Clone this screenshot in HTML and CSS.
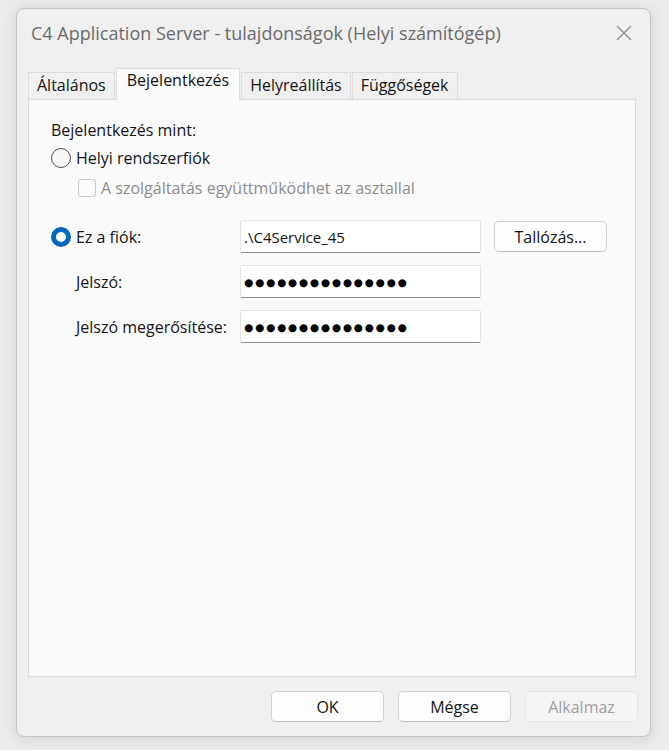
FILE: index.html
```html
<!DOCTYPE html>
<html lang="hu">
<head>
    <meta charset="UTF-8" />
    <meta name="viewport" content="width=device-width, initial-scale=1.0" />
    <title>C4 Application Server - tulajdonságok</title>
    <link rel="stylesheet" href="styles.css">
</head>
<body>

    <!-- Service properties dialog -->
    <div class="window">
        <div class="titlebar">
            <span class="title">C4 Application Server - tulajdonságok (Helyi számítógép)</span>
            <svg class="close" width="16" height="16" viewBox="0 0 16 16">
                <path d="M1 1 L15 15 M15 1 L1 15" stroke="#8a8a8a" stroke-width="1.3" fill="none" />
            </svg>
        </div>

        <div class="tabs">
            <div class="tab">Általános</div>
            <div class="tab active">Bejelentkezés</div>
            <div class="tab">Helyreállítás</div>
            <div class="tab">Függőségek</div>
        </div>

        <div class="panel">
            <div class="caption">Bejelentkezés mint:</div>

            <div class="option first">
                <span class="radio"></span>
                <span>Helyi rendszerfiók</span>
            </div>
            <div class="option sub disabled">
                <span class="checkbox"></span>
                <span>A szolgáltatás együttműködhet az asztallal</span>
            </div>

            <div class="account">
                <div class="option">
                    <span class="radio checked"></span>
                    <span>Ez a fiók:</span>
                </div>
                <div class="field">.\C4Service_45</div>
                <button class="btn">Tallózás...</button>

                <div class="label">Jelszó:</div>
                <div class="field"><span class="dots">●●●●●●●●●●●●●●●</span></div>
                <div></div>

                <div class="label">Jelszó megerősítése:</div>
                <div class="field"><span class="dots">●●●●●●●●●●●●●●●</span></div>
                <div></div>
            </div>
        </div>

        <div class="footer">
            <button class="btn">OK</button>
            <button class="btn">Mégse</button>
            <button class="btn" disabled>Alkalmaz</button>
        </div>
    </div>

</body>
</html>
```

FILE: styles.css
```css
body {
    margin: 0;
    background-color: #ececec;
    font-family: 'Open Sans', 'Liberation Sans', sans-serif;
    color: #141414;
    height: 750px;
    overflow: hidden;
}

.window {
    box-sizing: border-box;
    width: 635px;
    height: 729px;
    margin: 8px 0 0 16px;
    background: #f0f0f0;
    border: 1px solid #c4c4c4;
    border-radius: 8px;
    box-shadow: 0 2px 14px rgba(0, 0, 0, 0.12);
    display: flex;
    flex-direction: column;
}

.titlebar {
    height: 59px;
    display: flex;
    align-items: center;
    justify-content: space-between;
    padding: 0 18px 0 14px;
}

.title {
    font-size: 18px;
    color: #6b6b6b;
    margin-top: -12px;
}

.close {
    margin-top: -12px;
}

/* tab strip */
.tabs {
    display: flex;
    align-items: flex-end;
    height: 31px;
    padding-left: 11px;
    font-size: 16px;
}

.tab {
    box-sizing: border-box;
    height: 27px;
    padding: 1px 8px 0 8px;
    margin-right: 1px;
    background: #f0f0f0;
    border: 1px solid #dcdcdc;
    border-bottom: none;
}

.tab.active {
    height: 32px;
    margin-bottom: -1px;
    padding: 0 10px 0 10px;
    background: #fafafa;
    position: relative;
    z-index: 1;
}

.panel {
    flex: 1;
    margin: 0 14px 0 11px;
    padding: 18px 22px 0 22px;
    background: #fafafa;
    border: 1px solid #dcdcdc;
    font-size: 16px;
}

.caption {
    height: 24px;
    line-height: 24px;
}

.option {
    display: flex;
    align-items: center;
    gap: 5px;
    white-space: nowrap;
}

.option.first {
    height: 32px;
}

.option.sub {
    height: 28px;
    padding-left: 27px;
}

.disabled {
    color: #8d8d8d;
}

.radio {
    box-sizing: border-box;
    flex: none;
    width: 20px;
    height: 20px;
    border-radius: 50%;
    border: 1.5px solid #4f4f4f;
    background: #f6f6f6;
}

.radio.checked {
    border: 5px solid #0067c0;
    background: #ffffff;
}

.checkbox {
    box-sizing: border-box;
    width: 18px;
    height: 18px;
    border: 1px solid #c9c9c9;
    border-radius: 3px;
    background: #fbfbfb;
}

/* account / password grid */
.account {
    display: grid;
    grid-template-columns: 176px 241px 113px;
    grid-auto-rows: 33px;
    column-gap: 13px;
    row-gap: 12px;
    align-items: center;
    margin-top: 18px;
}

.label {
    padding-left: 25px;
    white-space: nowrap;
}

.field {
    box-sizing: border-box;
    height: 33px;
    padding: 0 3px;
    display: flex;
    align-items: center;
    background: #ffffff;
    border: 1px solid #e4e4e4;
    border-bottom: 1px solid #8c8c8c;
    border-radius: 2px;
    font-size: 15px;
}

.dots {
    font-family: 'DejaVu Sans', sans-serif;
    font-size: 10.5px;
    letter-spacing: 1.8px;
    color: #000000;
}

.btn {
    box-sizing: border-box;
    height: 31px;
    background: #fdfdfd;
    border: 1px solid #d2d2d2;
    border-bottom-color: #bcbcbc;
    border-radius: 5px;
    font-family: 'Open Sans', 'Liberation Sans', sans-serif;
    font-size: 16px;
    color: #141414;
    padding: 0;
}

.btn:disabled {
    background: #f5f5f5;
    border-color: #e6e6e6;
    color: #9d9d9d;
}

.footer {
    height: 59px;
    display: flex;
    justify-content: flex-end;
    align-items: flex-start;
    gap: 14px;
    padding: 14px 12px 0 0;
    box-sizing: border-box;
}

.footer .btn {
    width: 113px;
}
```
